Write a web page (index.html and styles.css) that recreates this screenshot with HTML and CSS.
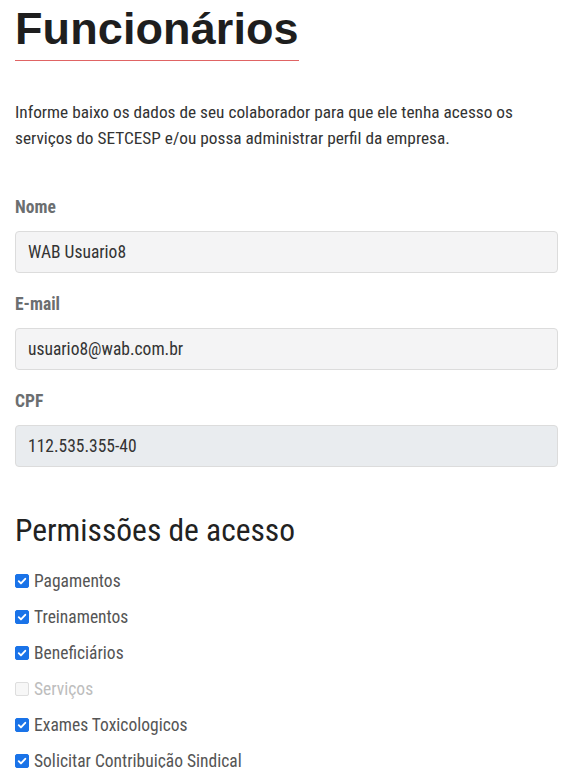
FILE: index.html
```html
<!DOCTYPE html>
<html lang="pt-BR">
<head>
<meta charset="utf-8">
<link rel="stylesheet" href="styles.css">
</head>
<body>
<main class="page">
  <header class="page-head">
    <h1 class="title">Funcionários</h1>
  </header>
  <p class="intro">Informe baixo os dados de seu colaborador para que ele tenha acesso os serviços do SETCESP e/ou possa administrar perfil da empresa.</p>

  <form class="form">
    <div class="field">
      <label class="field-label">Nome</label>
      <div class="input">WAB Usuario8</div>
    </div>
    <div class="field">
      <label class="field-label">E-mail</label>
      <div class="input">usuario8@wab.com.br</div>
    </div>
    <div class="field">
      <label class="field-label">CPF</label>
      <div class="input input-disabled">112.535.355-40</div>
    </div>

    <h2 class="section-title">Permissões de acesso</h2>
    <ul class="perms">
      <li class="perm"><span class="box checked"><svg viewBox="0 0 14 14"><path d="M3.2 7.2 L5.8 9.8 L10.8 4.4" /></svg></span><span>Pagamentos</span></li>
      <li class="perm"><span class="box checked"><svg viewBox="0 0 14 14"><path d="M3.2 7.2 L5.8 9.8 L10.8 4.4" /></svg></span><span>Treinamentos</span></li>
      <li class="perm"><span class="box checked"><svg viewBox="0 0 14 14"><path d="M3.2 7.2 L5.8 9.8 L10.8 4.4" /></svg></span><span>Beneficiários</span></li>
      <li class="perm perm-disabled"><span class="box"></span><span>Serviços</span></li>
      <li class="perm"><span class="box checked"><svg viewBox="0 0 14 14"><path d="M3.2 7.2 L5.8 9.8 L10.8 4.4" /></svg></span><span>Exames Toxicologicos</span></li>
      <li class="perm"><span class="box checked"><svg viewBox="0 0 14 14"><path d="M3.2 7.2 L5.8 9.8 L10.8 4.4" /></svg></span><span>Solicitar Contribuição Sindical</span></li>
    </ul>
  </form>
</main>
</body>
</html>
```
FILE: styles.css
```css
html, body {
  margin: 0;
  padding: 0;
  background: #ffffff;
}
body {
  font-family: Roboto, "Noto Sans", sans-serif;
  font-stretch: 80%;
  color: #333333;
  overflow: hidden;
  height: 768px;
}
.page {
  padding: 0 18px 0 15px;
}
.page-head {
  padding-top: 6px;
  display: inline-block;
  border-bottom: 1.5px solid #e06464;
  padding-bottom: 8px;
}
.title {
  margin: 0;
  font-family: "Liberation Sans", Arial, sans-serif;
  font-stretch: normal;
  font-weight: 700;
  font-size: 45px;
  line-height: 46px;
  color: #1e1e1e;
  letter-spacing: 0.1px;
}
.intro {
  margin: 38px 0 0 0;
  font-size: 17.3px;
  line-height: 26px;
  color: #333;
}
.form {
  margin-top: 46px;
}
.field {
  display: flex;
  flex-direction: column;
  margin-bottom: 21px;
}
.field-label {
  font-weight: 700;
  font-size: 17.5px;
  line-height: 20px;
  color: #6b6e70;
  margin-bottom: 14px;
}
.input {
  height: 40px;
  border: 1px solid #dcdcdc;
  border-radius: 4px;
  background: #f4f4f5;
  padding: 0 12px;
  display: flex;
  align-items: center;
  font-size: 17.5px;
  color: #333;
}
.input-disabled {
  background: #e9ecef;
}
.section-title {
  margin: 46px 0 0 0;
  font-weight: 400;
  font-size: 31.5px;
  line-height: 36px;
  color: #222;
}
.perms {
  list-style: none;
  margin: 14px 0 0 0;
  padding: 0;
}
.perm {
  display: flex;
  align-items: center;
  gap: 5px;
  height: 36px;
  font-size: 17.5px;
  color: #555;
}
.box {
  width: 14px;
  height: 14px;
  border-radius: 2px;
  border: 1px solid #c8c8c8;
  box-sizing: border-box;
  background: #fff;
  display: flex;
  align-items: center;
  justify-content: center;
}
.box.checked {
  background: #1a73e8;
  border-color: #1a73e8;
}
.box svg {
  width: 14px;
  height: 14px;
  fill: none;
  stroke: #fff;
  stroke-width: 2.2;
  stroke-linecap: round;
  stroke-linejoin: round;
}
.perm-disabled {
  color: #bdbdbd;
}
.perm-disabled .box {
  border-color: #dedede;
  background: #f7f7f7;
}
```
